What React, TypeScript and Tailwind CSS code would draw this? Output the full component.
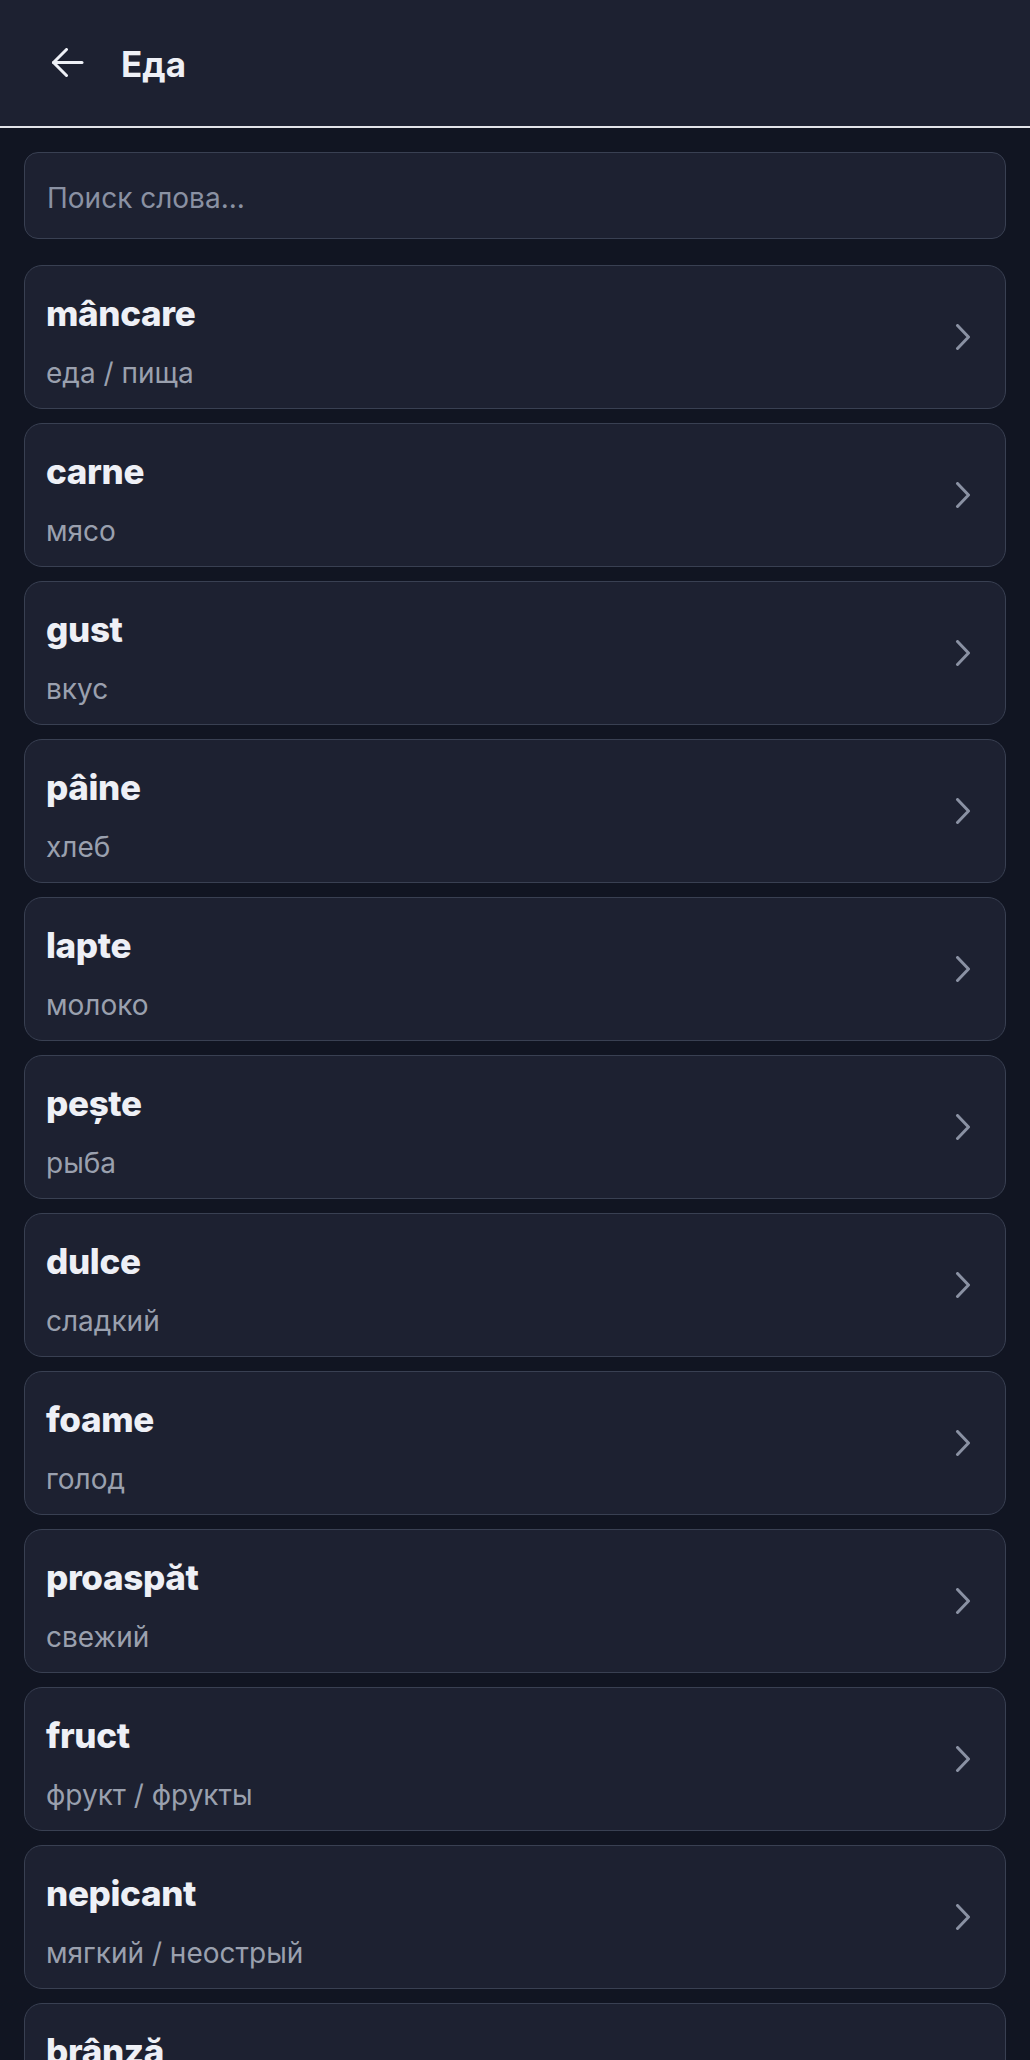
import { useState } from 'react'

interface Word {
  ro: string
  ru: string
}

const words: Word[] = [
  { ro: 'mâncare', ru: 'еда / пища' },
  { ro: 'carne', ru: 'мясо' },
  { ro: 'gust', ru: 'вкус' },
  { ro: 'pâine', ru: 'хлеб' },
  { ro: 'lapte', ru: 'молоко' },
  { ro: 'pește', ru: 'рыба' },
  { ro: 'dulce', ru: 'сладкий' },
  { ro: 'foame', ru: 'голод' },
  { ro: 'proaspăt', ru: 'свежий' },
  { ro: 'fruct', ru: 'фрукт / фрукты' },
  { ro: 'nepicant', ru: 'мягкий / неострый' },
  { ro: 'brânză', ru: 'сыр' },
]

export default function App() {
  const [query, setQuery] = useState('')
  const list = words.filter(w =>
    !query || w.ro.toLowerCase().includes(query.toLowerCase()) || w.ru.toLowerCase().includes(query.toLowerCase())
  )

  return (
    <div className="min-h-screen bg-[#111522] font-['Inter','Noto_Sans',sans-serif]">
      <header className="h-[128px] bg-[#1d2131] border-b-2 border-[#e2e3e8] flex items-center pl-[50px]">
        <button className="w-[35px] h-[30px] flex items-center justify-center">
          <svg width="35" height="30" viewBox="0 0 35 30" fill="none" stroke="#eef0f6" strokeWidth="3" strokeLinecap="round" strokeLinejoin="round">
            <path d="M3.5 14.5H32" />
            <path d="M16.5 1.5L3.5 14.5L16.5 27.5" />
          </svg>
        </button>
        <h1 className="ml-[36px] text-[35px] leading-none font-bold text-[#eef0f6] mt-[2px]">Еда</h1>
      </header>

      <main className="px-6 pt-6 pb-10">
        <input
          value={query}
          onChange={(e) => setQuery(e.target.value)}
          placeholder="Поиск слова..."
          className="w-full h-[87px] rounded-[14px] bg-[#1d2131] border border-[#394052] px-[22px] pt-[5px] text-[28px] text-[#eef0f6] placeholder:text-[#8a91a3] outline-none"
        />

        <div className="mt-[26px] flex flex-col gap-[14px]">
          {list.map(w => (
            <div
              key={w.ro}
              className="h-[144px] rounded-[18px] bg-[#1d2131] border border-[#394052] pl-[21px] pr-[34px] flex items-center justify-between"
            >
              <div className="flex flex-col pt-[9px]">
                <div className="text-[35px] leading-[44px] font-extrabold tracking-[-0.01em] text-[#eef0f6]">{w.ro}</div>
                <div className="mt-[19px] text-[28px] leading-[38px] text-[#9aa0ae]">{w.ru}</div>
              </div>
              <svg width="16" height="26" viewBox="0 0 16 26" fill="none" stroke="#8a91a3" strokeWidth="3" strokeLinecap="round" strokeLinejoin="round">
                <path d="M2.5 1.5L13.5 13L2.5 24.5" />
              </svg>
            </div>
          ))}
        </div>
      </main>
    </div>
  )
}
